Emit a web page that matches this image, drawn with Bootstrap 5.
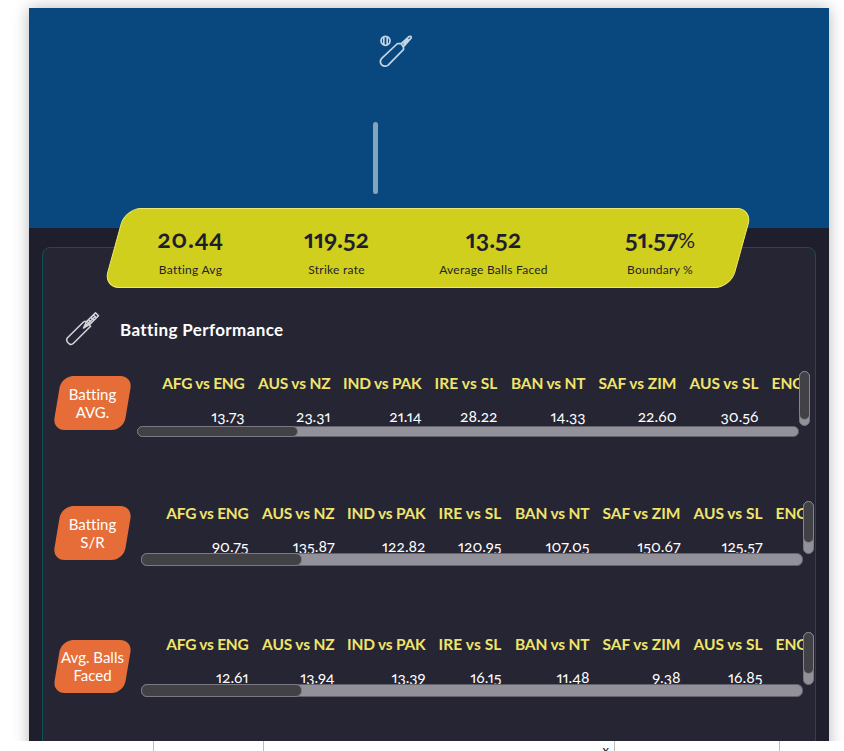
<!DOCTYPE html>
<html lang="en">
<head>
<meta charset="utf-8">
<meta name="viewport" content="width=device-width, initial-scale=1">
<title>Batting Performance</title>
<link rel="stylesheet" href="https://cdn.jsdelivr.net/npm/bootstrap@5.3.0/dist/css/bootstrap.min.css">
<style>
body{background:#fff;font-family:Candara,Lato,"Open Sans",sans-serif;font-variant-numeric:oldstyle-nums proportional-nums;font-variant-ligatures:none;height:751px;overflow:hidden;line-height:18px}
.page-wrap{height:741px;overflow:hidden;padding:8px 15px 0 29px}
.report{width:800px;height:760px;background:#1f1e2d;box-shadow:0 0 15px rgba(0,0,0,.28)}
.hero{height:220px;background:#09487f}
.hero-icon{margin:27px 0 0 350px}
.hero-rule{width:5px;height:72px;margin:53px 0 0 344px;border-radius:3px;background:#84a3bf}
.panel{width:774px;height:560px;margin:19px 0 0 12.5px;border:1px solid #154f54;border-radius:8px;background:#262534}
.stats{width:628px;height:80px;margin:-40px 0 0 71.5px}
.stats::before{content:"";position:absolute;inset:0;transform:skewX(-15.5deg);border:1px solid #efe86c;border-radius:16px;background:#d0cf1e}
.stat{color:#1f1e2d;text-align:center;position:relative;padding-top:17px;white-space:nowrap}
.num{font-size:25px;font-weight:700;line-height:26px}
.n1{letter-spacing:.6px}
.cap{font-size:12px;line-height:18px;margin-top:10px;letter-spacing:.25px}
.pct{font-weight:400;font-size:21px;line-height:1}
.s1{width:153px}.s2{width:139px}.s3{width:175px}.s4{width:158px}
.heading{height:34px;margin:24px 0 0 22px}
.title{font-size:17px;font-weight:700;color:#fff;margin:2px 0 0 20.5px;line-height:20px;letter-spacing:.38px}
.metric{height:66px}
.tag{width:71px;height:54px;margin-left:14px;margin-top:5px;color:#fff;font-size:15px;text-align:center}
.tag::before{content:"";position:absolute;inset:0;transform:skewX(-9.5deg);border-radius:12px;background:#e66d37}
.tag span{position:relative;white-space:nowrap;left:.5px}
.tag-low{margin-top:7.5px;height:53px}
.viewer{width:673px;margin-left:9px}
.viewer.shifted{margin-left:13px}
.clip{width:662px;height:55px;overflow:hidden}
.grid{table-layout:fixed;width:760px;border-collapse:collapse}
.grid th,.grid td{padding:0;text-align:right;white-space:nowrap}
.grid th{font-size:15.5px;color:#f0e46b;font-weight:700;height:24px;line-height:24px}
.grid th:nth-child(1){letter-spacing:-.25px}
.grid th:nth-child(2),.grid th:nth-child(5){letter-spacing:-.15px}
.grid th:nth-child(3){letter-spacing:-.2px}
.grid th:nth-child(4){letter-spacing:.1px}
.grid td{font-size:15.5px;color:#fff;height:42px;line-height:42px}
.grid th:last-child{text-align:left;padding-left:13px}
.vbar{width:11px;height:55px;background:#92919a;border:1px solid #787780;border-radius:6px}
.vthumb{height:49px;background:#424246;border:1px solid #85848d;border-radius:6px;margin:-1px}
.short .vthumb{height:42px}
.hbar{width:662px;height:11px;background:#92919a;border:1px solid #65646e;border-radius:6px}
.hthumb{width:161px;height:11px;margin:-1px;background:#424246;border:1px solid #7b7a84;border-radius:6px}
.m2{margin-top:64px}.m3{margin-top:65px}
.short .clip{height:52px}.short .vbar{height:53px}
.short .hbar,.short .hthumb{height:13px}
.sheet{height:10px;overflow:hidden}
.cell{border-right:1px solid #bdbdbd;height:10px;text-align:right;font-size:13px;line-height:19px;color:#111;padding-right:5px}
</style>
<script src="https://cdn.jsdelivr.net/npm/bootstrap@5.3.0/dist/js/bootstrap.bundle.min.js"></script>
</head>
<body>
<div class="page-wrap">
<main class="report">
<header class="hero d-flex flex-column align-items-start">
<svg class="hero-icon" width="34" height="34" viewBox="0 0 34 34" fill="none" stroke="#c5d5e3" stroke-width="1.7" stroke-linejoin="round"><circle cx="6.5" cy="5.8" r="4.5"/><path d="M4.8 1.7v8.2M8.2 1.7v8.2M18.5 8.5 2.7 23.3Q0 27 2.8 30Q6 32.5 9.4 29.8L24.6 14.4 24.3 11.8 22 8.6ZM22 8.8 30 1.6Q32.7.6 32 3.2L24.5 11.6M24.3 9.3l5.2-5.2"/></svg>
<div class="hero-rule"></div>
</header>
<section class="panel d-flex flex-column align-items-start">
<div class="stats d-flex position-relative flex-shrink-0">
<div class="stat s1"><div class="num n1">20.44</div><div class="cap">Batting Avg</div></div>
<div class="stat s2"><div class="num">119.52</div><div class="cap">Strike rate</div></div>
<div class="stat s3"><div class="num">13.52</div><div class="cap">Average Balls Faced</div></div>
<div class="stat s4"><div class="num">51.57<span class="pct">%</span></div><div class="cap">Boundary %</div></div>
</div>
<div class="heading d-flex align-items-center">
<svg width="35" height="34" viewBox="0 0 35 34" fill="none" stroke="#d4d4da" stroke-width="1.5" stroke-linejoin="round"><path d="M19 9.5 2.5 25.8Q.6 28 3 30.7L4.5 32Q6.5 33.3 8.5 31.3L25.6 14.2Q24.2 13 24.5 11.7L21.8 9.2Q20.2 9.5 19 9.5M21.8 9.2 30.5.9 33.5 3.8 25 12.2 18.5 16ZM18.5 16l11-11M28.5 3l3 3M26 5.4l3 3M23.5 7.8l3 3"/></svg>
<h2 class="title">Batting Performance</h2>
</div>
<div class="metric d-flex align-items-start flex-shrink-0" style="margin-top:25px">
<div class="tag position-relative d-flex align-items-center justify-content-center"><span>Batting<br>AVG.</span></div>
<div class="viewer d-flex">
<div><div class="clip"><table class="grid"><colgroup><col style="width:108px"><col style="width:86px"><col style="width:91px"><col style="width:76px"><col style="width:88px"><col style="width:91px"><col style="width:82px"><col></colgroup>
<tr><th>AFG vs ENG</th><th>AUS vs NZ</th><th>IND vs PAK</th><th>IRE vs SL</th><th>BAN vs NT</th><th>SAF vs ZIM</th><th>AUS vs SL</th><th>ENG vs NZ</th></tr>
<tr><td>13.73</td><td>23.31</td><td>21.14</td><td>28.22</td><td>14.33</td><td>22.60</td><td>30.56</td><td></td></tr></table></div>
<div class="hbar"><div class="hthumb"></div></div></div>
<div class="vbar"><div class="vthumb"></div></div>
</div>
</div>
<div class="metric short m2 d-flex align-items-start flex-shrink-0">
<div class="tag position-relative d-flex align-items-center justify-content-center"><span>Batting<br>S/R</span></div>
<div class="viewer shifted d-flex">
<div><div class="clip"><table class="grid"><colgroup><col style="width:108px"><col style="width:86px"><col style="width:91px"><col style="width:76px"><col style="width:88px"><col style="width:91px"><col style="width:82px"><col></colgroup>
<tr><th>AFG vs ENG</th><th>AUS vs NZ</th><th>IND vs PAK</th><th>IRE vs SL</th><th>BAN vs NT</th><th>SAF vs ZIM</th><th>AUS vs SL</th><th>ENG vs NZ</th></tr>
<tr><td>90.75</td><td>135.87</td><td>122.82</td><td>120.95</td><td>107.05</td><td>150.67</td><td>125.57</td><td></td></tr></table></div>
<div class="hbar"><div class="hthumb"></div></div></div>
<div class="vbar"><div class="vthumb"></div></div>
</div>
</div>
<div class="metric short m3 d-flex align-items-start flex-shrink-0">
<div class="tag tag-low position-relative d-flex align-items-center justify-content-center"><span>Avg. Balls<br>Faced</span></div>
<div class="viewer shifted d-flex">
<div><div class="clip"><table class="grid"><colgroup><col style="width:108px"><col style="width:86px"><col style="width:91px"><col style="width:76px"><col style="width:88px"><col style="width:91px"><col style="width:82px"><col></colgroup>
<tr><th>AFG vs ENG</th><th>AUS vs NZ</th><th>IND vs PAK</th><th>IRE vs SL</th><th>BAN vs NT</th><th>SAF vs ZIM</th><th>AUS vs SL</th><th>ENG vs NZ</th></tr>
<tr><td>12.61</td><td>13.94</td><td>13.39</td><td>16.15</td><td>11.48</td><td>9.38</td><td>16.85</td><td></td></tr></table></div>
<div class="hbar"><div class="hthumb"></div></div></div>
<div class="vbar"><div class="vthumb"></div></div>
</div>
</div>
</section>
</main>
</div>
<footer class="sheet d-flex"><div class="cell" style="width:154px"></div><div class="cell" style="width:110px"></div><div class="cell" style="width:351px">x</div><div class="cell" style="width:165px"></div></footer>
</body>
</html>
